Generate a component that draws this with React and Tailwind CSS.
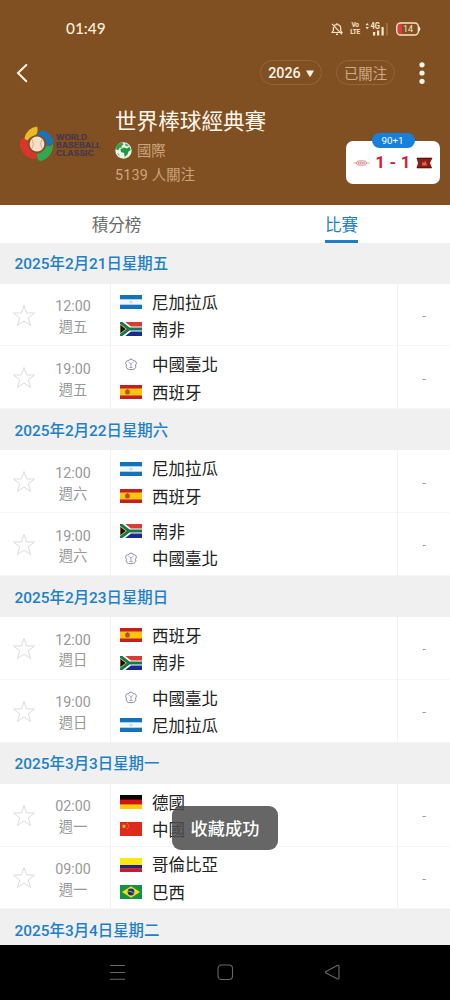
const sections = [
  {
    date: '2025年2月21日星期五',
    games: [
      { time: '12:00', day: '週五', teams: ['ni', 'za'] },
      { time: '19:00', day: '週五', teams: ['tpe', 'es'] },
    ],
  },
  {
    date: '2025年2月22日星期六',
    games: [
      { time: '12:00', day: '週六', teams: ['ni', 'es'] },
      { time: '19:00', day: '週六', teams: ['za', 'tpe'] },
    ],
  },
  {
    date: '2025年2月23日星期日',
    games: [
      { time: '12:00', day: '週日', teams: ['es', 'za'] },
      { time: '19:00', day: '週日', teams: ['tpe', 'ni'] },
    ],
  },
  {
    date: '2025年3月3日星期一',
    games: [
      { time: '02:00', day: '週一', teams: ['de', 'cn'] },
      { time: '09:00', day: '週一', teams: ['co', 'br'] },
    ],
  },
  { date: '2025年3月4日星期二', games: [] },
];

const names = {
  ni: '尼加拉瓜',
  za: '南非',
  tpe: '中國臺北',
  es: '西班牙',
  de: '德國',
  cn: '中國',
  co: '哥倫比亞',
  br: '巴西',
};

const flags = {
  ni: (
    <>
      <rect width="22" height="14" fill="#f4f7f8" />
      <rect width="22" height="4.3" fill="#1273bd" />
      <rect y="9.7" width="22" height="4.3" fill="#1273bd" />
      <circle cx="11" cy="7" r="1.1" fill="none" stroke="#a9c4b4" strokeWidth="0.6" />
    </>
  ),
  za: (
    <>
      <rect width="22" height="7" fill="#dc3a34" />
      <rect y="7" width="22" height="7" fill="#1b2a92" />
      <path d="M0 -1L10 7H22M0 15L10 7" fill="none" stroke="#fff" strokeWidth="5" />
      <path d="M0 0L9 7H22M0 14L9 7" fill="none" stroke="#15794f" strokeWidth="3" />
      <path d="M0 2.2L6.2 7L0 11.8Z" fill="#111" stroke="#e8b33a" strokeWidth="0.9" />
    </>
  ),
  tpe: (
    <>
      <path
        d="M11 1.2C12.3 1.2 13 1.8 13.3 2.8C14.5 2.5 15.8 3 16.2 4.3C16.6 5.5 16.1 6.4 15.3 7.1C16 8 16 9.6 15 10.5C14.2 11.3 13 11.6 12.3 11.6H9.7C9 11.6 7.8 11.3 7 10.5C6 9.6 6 8 6.7 7.1C5.9 6.4 5.4 5.5 5.8 4.3C6.2 3 7.5 2.5 8.7 2.8C9 1.8 9.7 1.2 11 1.2Z"
        fill="#fff"
        stroke="#77768f"
        strokeWidth="0.9"
      />
      <path d="M9 4.2L11 6.2L13 4.2M11 6V9.6M9.3 9.6H12.7" fill="none" stroke="#8d8fc8" strokeWidth="0.8" />
    </>
  ),
  es: (
    <>
      <rect width="22" height="14" fill="#c51f22" />
      <rect y="3.5" width="22" height="7" fill="#fcc40e" />
      <path d="M5.2 5.2H9.8V8Q9.8 9.6 7.5 9.6Q5.2 9.6 5.2 8Z" fill="#b0562a" />
      <rect x="6.6" y="4.4" width="1.8" height="1.4" fill="#8f3d1e" />
    </>
  ),
  de: (
    <>
      <rect width="22" height="14" fill="#0b0606" />
      <rect y="4.6" width="22" height="4.8" fill="#d9100f" />
      <rect y="9.3" width="22" height="4.7" fill="#fbcb0c" />
    </>
  ),
  cn: (
    <>
      <rect width="22" height="14" fill="#dd2a1b" />
      <path d="M4 1.8L4.6 3.5H6.4L5 4.6L5.5 6.3L4 5.3L2.5 6.3L3 4.6L1.6 3.5H3.4Z" fill="#fcd22d" />
      <circle cx="7.5" cy="1.7" r="0.5" fill="#f6b52d" />
      <circle cx="8.7" cy="3" r="0.5" fill="#f6b52d" />
      <circle cx="8.7" cy="4.9" r="0.5" fill="#f6b52d" />
      <circle cx="7.5" cy="6.2" r="0.5" fill="#f6b52d" />
    </>
  ),
  co: (
    <>
      <rect width="22" height="14" fill="#fbe90c" />
      <rect y="7" width="22" height="3.6" fill="#28208a" />
      <rect y="10.5" width="22" height="3.5" fill="#c51c32" />
    </>
  ),
  br: (
    <>
      <rect width="22" height="14" fill="#149344" />
      <path d="M11 1.3L20 7L11 12.7L2 7Z" fill="#f0e11b" />
      <circle cx="11" cy="7" r="3.4" fill="#21336f" />
      <path d="M7.9 6.2Q11.5 5.8 14 8.4" fill="none" stroke="#dfe6e8" strokeWidth="0.6" />
    </>
  ),
};

const Flag = ({ code }) => (
  <svg viewBox="0 0 22 14" className="h-[14px] w-[22px] shrink-0 overflow-hidden">
    {flags[code]}
  </svg>
);

const StatusBar = () => (
  <div className="flex h-[58px] items-center justify-between pr-[29px] pl-[66px]">
    <span className="font-[Lato,sans-serif] text-[15.4px] leading-none font-medium text-[#fdeedd]">01:49</span>
    <div className="flex items-center text-[#fbe3c8]">
      <svg viewBox="0 0 12 14" className="h-[14px] w-[12px]" fill="none" stroke="currentColor" strokeWidth="1.2">
        <path d="M1 10.5H11L9.7 8.5V5.5Q9.3 2.6 6 2.5Q2.8 2.6 2.4 5.5V8.5ZM6 2.5V1M5 12.4H7M1 1.8L11 12.4" />
      </svg>
      <div className="ml-[7px] flex w-[10px] flex-col items-center font-[Roboto,sans-serif] text-[6.6px] leading-[7px] font-bold tracking-[-0.4px]">
        <span>Vo</span>
        <span>LTE</span>
      </div>
      <svg viewBox="0 0 25 14" className="ml-[5px] h-[14px] w-[25px]" fill="currentColor">
        <path d="M0.5 3.3L2.2 1L3.9 3.3ZM0.5 4.9L2.2 7.2L3.9 4.9Z" />
        <text x="5.5" y="6.8" fontFamily="Roboto" fontSize="8.2" fontWeight="700" textLength="9.5" lengthAdjust="spacingAndGlyphs">
          4G
        </text>
        <rect x="8" y="10" width="2.2" height="3.5" />
        <rect x="12" y="8.5" width="2.2" height="5" />
        <rect x="16.5" y="5" width="2.2" height="8.5" />
        <rect x="21.3" y="1" width="1.3" height="12.5" opacity="0.3" />
      </svg>
      <svg viewBox="0 0 25 14" className="ml-[6px] h-[14px] w-[25px]">
        <path d="M4 2H6V12H4Q1.8 12 1.8 9V5Q1.8 2 4 2Z" fill="#e3393d" />
        <rect x="0.8" y="1" width="21.6" height="12" rx="3.8" fill="none" stroke="#fbe3c8" strokeWidth="1.4" />
        <path d="M23.2 4.8Q24.8 7 23.2 9.2Z" fill="#fbe3c8" stroke="#fbe3c8" />
        <text x="12" y="10.2" textAnchor="middle" fontFamily="Roboto" fontSize="9" fill="#fbe3c8">
          14
        </text>
      </svg>
    </div>
  </div>
);

const LeagueLogo = () => (
  <svg viewBox="0 0 86 38" className="h-[38px] w-[86px] shrink-0">
    <path d="M5.5 13Q8 3 18 1.5Q19.5 5 17.5 9.5Q11 11.5 8.5 15.5Q5.5 15.5 5.5 13Z" fill="#edb920" />
    <path d="M17.5 9.5Q19.5 6.5 22.5 5.5Q32 7 34.5 17Q31 21.5 27.5 20.5Q28.5 11.5 17.5 9.5Z" fill="#1576ba" />
    <path d="M27.5 20.5Q31.5 22 34 19Q34.5 31.5 21.5 36.3Q17.5 34.5 18 29Q25 27.5 27.5 20.5Z" fill="#35a650" />
    <path d="M3 13.5Q6 13.5 8.5 15.5Q7.5 25.5 17.5 28.5Q19 31.5 16.5 34Q4 33 0.8 20.5Q0.5 16 3 13.5Z" fill="#dc342d" />
    <circle cx="18" cy="19" r="7.4" fill="#f4dfc8" />
    <path d="M13 14.5Q16 19 13 23.5M23 14.5Q20 19 23 23.5" fill="none" stroke="#d9a184" strokeWidth="0.9" />
    <g fill="#42364c" fontFamily="Inter" fontWeight="700" fontSize="7.2">
      <text x="37" y="14.6" textLength="31" lengthAdjust="spacingAndGlyphs">
        WORLD
      </text>
      <text x="37" y="22.6" textLength="45" lengthAdjust="spacingAndGlyphs">
        BASEBALL
      </text>
      <text x="37" y="30.6" textLength="38" lengthAdjust="spacingAndGlyphs">
        CLASSIC
      </text>
    </g>
  </svg>
);

const Globe = () => (
  <svg viewBox="0 0 17 17" className="h-[17px] w-[17px]">
    <circle cx="8.5" cy="8.5" r="8.2" fill="#eaf3e6" />
    <path d="M1 5Q3 1 7.5 0.8L8.5 2.5L6.5 4L7 5.5L4.5 6L3.5 8L1.5 8Z" fill="#35a050" />
    <path d="M5.5 7L9 5.5L12 6.5L14.5 4.8L15.8 8L13.5 9.5L12.5 12.5L9.8 15L9 11L6 10Z" fill="#1f9a43" />
    <path d="M10.5 1.2L14 3.2L12 4.5L10 3.5ZM2 11L4 12L4.5 14.5Z" fill="#54b268" />
  </svg>
);

const LiveScore = () => (
  <div className="relative flex h-[43px] w-[94px] items-center justify-between rounded-[7px] bg-white px-[7px]">
    <svg viewBox="0 0 17 6" className="h-[6px] w-[17px]">
      <path d="M0 3H17" stroke="#dfa5a2" strokeWidth="0.8" />
      <ellipse cx="8.5" cy="3" rx="5.2" ry="2.3" fill="#f5dcda" stroke="#cf7975" strokeWidth="0.7" />
      <path d="M5 3H12" stroke="#c8615d" strokeWidth="1" strokeDasharray="1.2 0.6" />
    </svg>
    <span className="text-[17px] leading-none font-bold tracking-[0.2px] whitespace-pre text-[#d31f3a]">1 - 1</span>
    <svg viewBox="0 0 17 12" className="h-[12px] w-[17px]">
      <path d="M0.5 1H16.5L14 6L16 11H0.5L2 6Z" fill="#8c1d1a" />
      <path d="M1 1.2H16M1 10.8H15.5" stroke="#4a1410" strokeWidth="1" />
      <path d="M6 8.5L6.5 4.5L8 6L9.5 3.5L11 8.5Z" fill="#d9703b" />
    </svg>
    <span className="absolute -top-[8px] left-[26px] flex h-[15px] w-[43px] items-center justify-center rounded-full bg-[#1780dc] pr-[2px] text-[9.8px] leading-none text-white">
      90+1
    </span>
  </div>
);

const Header = () => (
  <header className="h-[204.5px] bg-[#805022]">
    <StatusBar />
    <div className="flex h-[29px] items-center pr-[25px] pl-[16px]">
      <svg viewBox="0 0 12 20" className="h-[20px] w-[12px]" fill="none" stroke="#fff4e6" strokeWidth="2" strokeLinecap="round">
        <path d="M10.3 2L2 10L10.3 18.3" />
      </svg>
      <button className="ml-auto flex h-[25px] w-[62px] items-center justify-center gap-[5px] rounded-full border border-[#94643a] pt-px text-[14.3px] leading-none font-medium text-[#fff2e4]">
        2026
        <svg viewBox="0 0 8 7" className="h-[7px] w-[8px]" fill="currentColor">
          <path d="M0 0.5H8L4.6 6.5H3.4Z" />
        </svg>
      </button>
      <button className="ml-[14px] flex h-[25px] w-[59px] items-center justify-center rounded-full border border-[#94643a] pt-[3px] text-[14.3px] leading-none text-[#cfaa87]">
        已關注
      </button>
      <svg viewBox="0 0 6 24" className="ml-[24px] h-[24px] w-[6px]" fill="#fff6ea">
        <circle cx="3" cy="3.8" r="2.6" />
        <circle cx="3" cy="12" r="2.6" />
        <circle cx="3" cy="20.3" r="2.6" />
      </svg>
    </div>
    <div className="flex items-start pt-[21px] pr-[10px] pl-[19px]">
      <div className="pt-[17px]">
        <LeagueLogo />
      </div>
      <div className="ml-[10px] flex flex-col">
        <h1 className="pt-[1px] text-[21.6px] leading-[26px] whitespace-nowrap text-[#fff6ec]">世界棒球經典賽</h1>
        <div className="mt-[6px] flex items-center gap-[5px] text-[14.3px] leading-[18px] text-[#cda47c]">
          <Globe />
          <span className="pt-px">國際</span>
        </div>
        <span className="mt-[6px] text-[14.3px] leading-[18px] tracking-[0.2px] text-[#cda47c]">5139 人關注</span>
      </div>
      <div className="mt-[33px] ml-auto">
        <LiveScore />
      </div>
    </div>
  </header>
);

const Tabs = () => (
  <nav className="flex h-[38px] bg-white text-[16.5px] leading-none">
    <div className="flex flex-1 items-center justify-center pt-[5px] pl-[8px] text-[#6b6b6b]">積分榜</div>
    <div className="flex flex-1 justify-center pl-[8px]">
      <div className="flex items-center border-b-[3px] border-[#1c7fc9] pt-[8px] text-[#1c7fc9]">比賽</div>
    </div>
  </nav>
);

const Game = ({ game }) => (
  <div className="flex h-[62.7px] border-b border-[#f5f5f5] bg-white">
    <div className="flex w-[110.5px] items-center border-r border-[#f0f0f0] pt-[2px] pl-[12px]">
      <svg viewBox="0 0 24 24" className="h-[24px] w-[24px] shrink-0" fill="none" stroke="#dcdcdc" strokeWidth="1">
        <path d="M12 1.5L14.7 9H22.5L16.3 13.8L18.6 21.5L12 17L5.4 21.5L7.7 13.8L1.5 9H9.3Z" />
      </svg>
      <div className="ml-[11px] flex w-[52px] flex-col items-center pt-[2.5px] text-[14.3px] leading-[20.5px] text-[#999]">
        <span>{game.time}</span>
        <span>{game.day}</span>
      </div>
    </div>
    <div className="flex flex-1 flex-col justify-center pt-[2px] pl-[9.5px] text-[16.5px] leading-[27.5px] text-[#222]">
      {game.teams.map((code) => (
        <div key={code} className="flex h-[27.4px] items-center gap-[10px]">
          <Flag code={code} />
          <span className="pt-[3px]">{names[code]}</span>
        </div>
      ))}
    </div>
    <div className="flex w-[53px] items-center justify-center border-l border-[#f0f0f0] pt-[2px] text-[13px] text-[#999]">-</div>
  </div>
);

const NavBar = () => (
  <div className="flex h-[55px] items-center justify-between bg-black pr-[109px] pl-[109px]">
    <svg viewBox="0 0 17 17" className="h-[17px] w-[17px]" stroke="#686868" strokeWidth="1.1">
      <path d="M1 1.5H16M1 8.5H16M1 15.3H16" />
    </svg>
    <svg viewBox="0 0 17 17" className="h-[17px] w-[17px]" fill="none" stroke="#686868" strokeWidth="1.1">
      <rect x="1" y="1" width="14.5" height="14.5" rx="3.5" />
    </svg>
    <svg viewBox="0 0 17 17" className="h-[17px] w-[17px]" fill="none" stroke="#686868" strokeWidth="1.1">
      <path d="M2 7.5L13.2 1.6Q15 0.9 15 2.6V13.8Q15 15.5 13.2 14.8L2 9Q0.8 8.2 2 7.5Z" />
    </svg>
  </div>
);

export default function App() {
  return (
    <div className="relative flex h-[1000px] w-[450px] flex-col overflow-hidden bg-white font-[Roboto,'Noto_Sans_CJK_TC',sans-serif]">
      <Header />
      <Tabs />
      <main className="min-h-0 flex-1 overflow-hidden">
        {sections.map((section) => (
          <section key={section.date}>
            <h2 className="flex h-[41.3px] items-center bg-[#f0f0f0] pt-[4px] pl-[14.5px] text-[15.4px] leading-none font-medium text-[#1d80c8]">
              {section.date}
            </h2>
            {section.games.map((game) => (
              <Game key={game.time} game={game} />
            ))}
          </section>
        ))}
      </main>
      <NavBar />

      {/* Toast */}
      <div className="absolute top-[806px] left-[172px] flex h-[44px] w-[106px] items-center justify-center rounded-[9px] bg-[#4b4b4b]/85 pt-[3px] text-[17.2px] leading-none font-medium text-white">
        收藏成功
      </div>
    </div>
  );
}
